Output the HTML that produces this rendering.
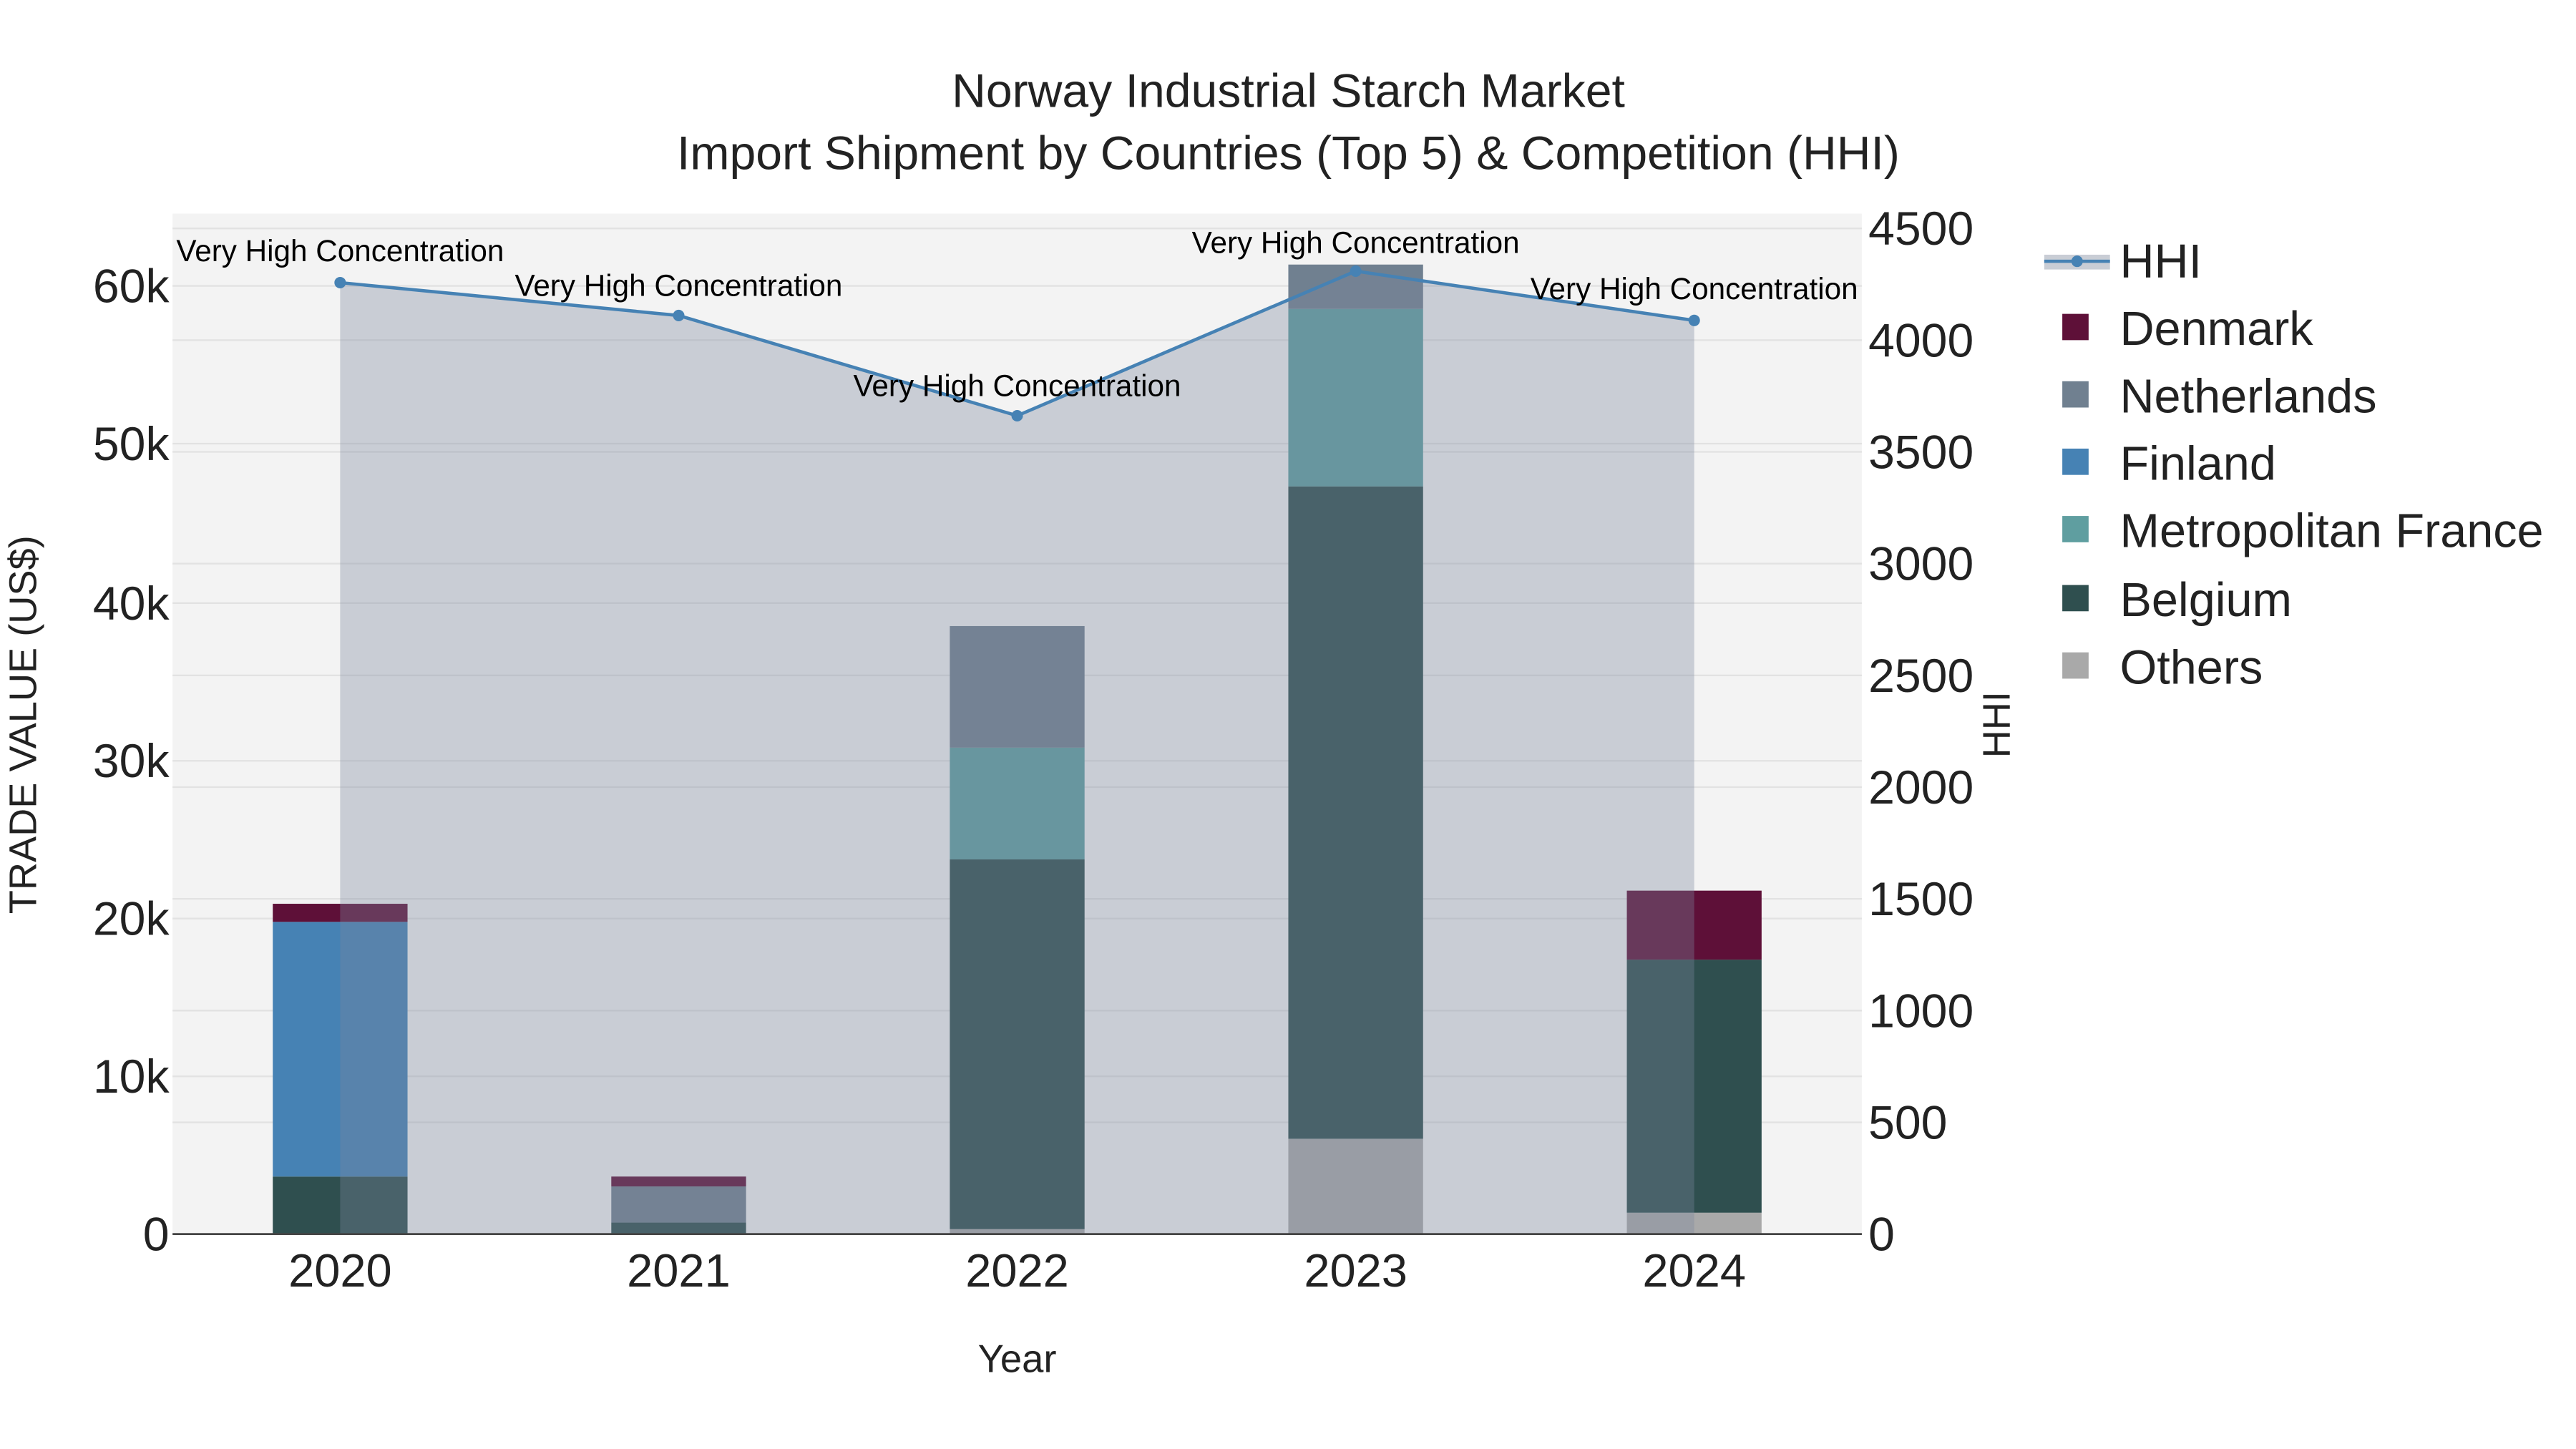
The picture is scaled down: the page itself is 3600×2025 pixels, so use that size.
<!DOCTYPE html>
<html><head><meta charset="utf-8"><style>html,body{margin:0;padding:0;background:#fff}svg{display:block}text{font-family:"Liberation Sans",sans-serif}</style></head>
<body>
<svg width="3600" height="2025" viewBox="0 0 1567.6 881.8" preserveAspectRatio="none" xmlns="http://www.w3.org/2000/svg">
<rect x="0" y="0" width="1567.6" height="881.8" fill="#fff"/>
<rect x="105" y="130" width="1028" height="621" fill="#f3f3f3"/>
<g stroke="#e2e2e2" stroke-width="1">
<line x1="105" x2="1133" y1="655" y2="655"/><line x1="105" x2="1133" y1="559" y2="559"/><line x1="105" x2="1133" y1="463" y2="463"/><line x1="105" x2="1133" y1="367" y2="367"/><line x1="105" x2="1133" y1="270" y2="270"/><line x1="105" x2="1133" y1="174" y2="174"/>
<line x1="105" x2="1133" y1="683" y2="683"/><line x1="105" x2="1133" y1="615" y2="615"/><line x1="105" x2="1133" y1="547" y2="547"/><line x1="105" x2="1133" y1="479" y2="479"/><line x1="105" x2="1133" y1="411" y2="411"/><line x1="105" x2="1133" y1="343" y2="343"/><line x1="105" x2="1133" y1="275" y2="275"/><line x1="105" x2="1133" y1="207" y2="207"/><line x1="105" x2="1133" y1="139" y2="139"/>
</g>
<rect x="166" y="716" width="82" height="35" fill="#2f4f4f"/>
<rect x="166" y="561" width="82" height="155" fill="#4682b4"/>
<rect x="166" y="550" width="82" height="11" fill="#5e1038"/>
<rect x="372" y="744" width="82" height="7" fill="#2f4f4f"/>
<rect x="372" y="722" width="82" height="22" fill="#708090"/>
<rect x="372" y="716" width="82" height="6" fill="#5e1038"/>
<rect x="578" y="748" width="82" height="3" fill="#a9a9a9"/>
<rect x="578" y="523" width="82" height="225" fill="#2f4f4f"/>
<rect x="578" y="455" width="82" height="68" fill="#5f9ea0"/>
<rect x="578" y="381" width="82" height="74" fill="#708090"/>
<rect x="784" y="693" width="82" height="58" fill="#a9a9a9"/>
<rect x="784" y="296" width="82" height="397" fill="#2f4f4f"/>
<rect x="784" y="188" width="82" height="108" fill="#5f9ea0"/>
<rect x="784" y="161" width="82" height="27" fill="#708090"/>
<rect x="990" y="738" width="82" height="13" fill="#a9a9a9"/>
<rect x="990" y="584" width="82" height="154" fill="#2f4f4f"/>
<rect x="990" y="542" width="82" height="42" fill="#5e1038"/>
<polygon points="207,751 207,172 413,192 619,253 825,165 1031,195 1031,751" fill="rgb(124,136,158)" fill-opacity="0.35"/>
<polyline points="207,172 413,192 619,253 825,165 1031,195" fill="none" stroke="#4682b4" stroke-width="2"/>
<g fill="#4682b4"><circle cx="207" cy="172" r="3.5"/><circle cx="413" cy="192" r="3.5"/><circle cx="619" cy="253" r="3.5"/><circle cx="825" cy="165" r="3.5"/><circle cx="1031" cy="195" r="3.5"/></g>
<line x1="105" x2="1133" y1="751" y2="751" stroke="#444" stroke-width="1.2"/>
<g font-size="18.4" text-anchor="middle" fill="#000">
<text x="207" y="159">Very High Concentration</text>
<text x="413" y="180">Very High Concentration</text>
<text x="619" y="241">Very High Concentration</text>
<text x="825" y="154">Very High Concentration</text>
<text x="1031" y="182">Very High Concentration</text>
</g>
<g font-size="28.8" text-anchor="middle" fill="#222">
<text x="784" y="65">Norway Industrial Starch Market</text>
<text x="784" y="103">Import Shipment by Countries (Top 5) &amp; Competition (HHI)</text>
</g>
<g font-size="28.8" text-anchor="end" fill="#222">
<text x="103" y="761">0</text><text x="103" y="665">10k</text><text x="103" y="569">20k</text><text x="103" y="473">30k</text><text x="103" y="377">40k</text><text x="103" y="280">50k</text><text x="103" y="184">60k</text>
</g>
<g font-size="28.8" fill="#222">
<text x="1137" y="761">0</text><text x="1137" y="693">500</text><text x="1137" y="625">1000</text><text x="1137" y="557">1500</text><text x="1137" y="489">2000</text><text x="1137" y="421">2500</text><text x="1137" y="353">3000</text><text x="1137" y="285">3500</text><text x="1137" y="217">4000</text><text x="1137" y="149">4500</text>
</g>
<g font-size="28.3" text-anchor="middle" fill="#222">
<text x="207" y="783">2020</text><text x="413" y="783">2021</text><text x="619" y="783">2022</text><text x="825" y="783">2023</text><text x="1031" y="783">2024</text>
</g>
<text x="619" y="835" font-size="23.7" text-anchor="middle" fill="#222">Year</text>
<text transform="translate(22,441) rotate(-90)" font-size="23.6" text-anchor="middle" fill="#222">TRADE VALUE (US$)</text>
<text transform="translate(1223,441) rotate(-90)" font-size="23.6" text-anchor="middle" fill="#222">HHI</text>
<rect x="1244" y="155" width="40" height="9" fill="#c9cdd5"/>
<line x1="1244" x2="1284" y1="159" y2="159" stroke="#4682b4" stroke-width="2"/>
<circle cx="1264" cy="159" r="3.5" fill="#4682b4"/>
<rect x="1255" y="191" width="16" height="16" fill="#5e1038"/>
<rect x="1255" y="232" width="16" height="16" fill="#708090"/>
<rect x="1255" y="273" width="16" height="16" fill="#4682b4"/>
<rect x="1255" y="314" width="16" height="16" fill="#5f9ea0"/>
<rect x="1255" y="356" width="16" height="16" fill="#2f4f4f"/>
<rect x="1255" y="397" width="16" height="16" fill="#a9a9a9"/>
<g font-size="29" fill="#222">
<text x="1290" y="169">HHI</text><text x="1290" y="210">Denmark</text><text x="1290" y="251">Netherlands</text><text x="1290" y="292">Finland</text><text x="1290" y="333">Metropolitan France</text><text x="1290" y="375">Belgium</text><text x="1290" y="416">Others</text>
</g>
</svg>
</body></html>
